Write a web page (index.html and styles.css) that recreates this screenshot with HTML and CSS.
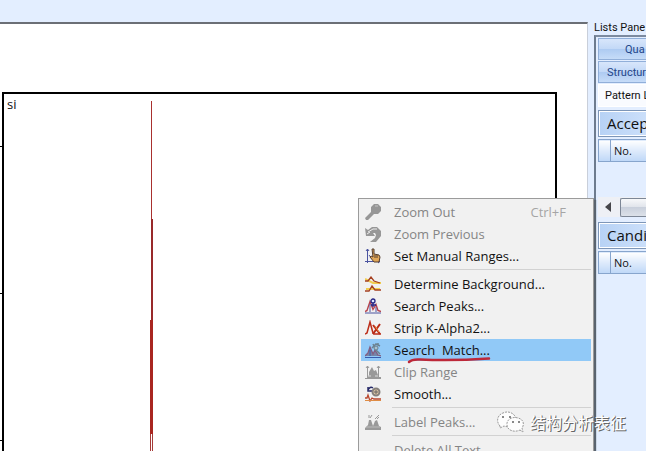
FILE: index.html
```html
<!DOCTYPE html>
<html lang="en">
<head>
<meta charset="utf-8">
<title>Search Match</title>
<link rel="stylesheet" href="styles.css">
</head>
<body>
<div class="window">
  <main class="document">
    <div class="plot">
      <svg class="axis" width="2" height="359" shape-rendering="crispEdges"><path d="M0 54.500h3M0 201.500h3M0 348.500h3" stroke="#000"/></svg>
      <div class="frame">
        <span class="scan-name">si</span>
        <svg class="peak" width="6" height="350" shape-rendering="crispEdges">
          <path d="M2 0h1v333h-1z" fill="#a8302e"/>
          <path d="M2 118h2v101h-2z" fill="#98292a"/>
          <path d="M1 219h3v114h-3z" fill="#a92620"/>
          <path d="M1 333h1v17h-1zM3 333h1v17h-1z" fill="#a63a38"/>
        </svg>
      </div>
    </div>
  </main>
  <aside class="lists">
    <div class="lists-title">Lists Pane</div>
    <div class="lists-body">
      <div class="tabs">
        <button class="tab tab-top">Qua</button>
        <button class="tab">Structur</button>
        <button class="tab active">Pattern L</button>
      </div>
      <section class="list">
        <h2>Accep</h2>
        <table><thead><tr><th class="mark"></th><th>No.</th></tr></thead></table>
        <div class="empty"></div>
        <div class="scrollbar"><svg width="22" height="20"><path d="M13 5v10l-6-5z" fill="#46464a"/></svg><span class="thumb"></span></div>
      </section>
      <section class="list">
        <h2>Candi</h2>
        <table><thead><tr><th class="mark"></th><th>No.</th></tr></thead></table>
      </section>
    </div>
  </aside>
</div>

<div class="menu">
  <button class="item" disabled>
    <svg class="icon" viewBox="0 0 16 16"><path d="M9 0h4l3 3v4l-3 3H9L3 16H1l-1-2 6-6V3z" fill="#979797"/><path d="M10 2h3" stroke="#c4c4c4"/></svg>
    <span>Zoom Out</span><span class="key">Ctrl+F</span></button>
  <button class="item" disabled>
    <svg class="icon" viewBox="0 0 16 16"><path d="M0 2l3 2 4-3h5l4 4v5l-5 6H5l5-4 1-3-1-2H8l2 3H1z" fill="#979797"/><path d="M3 6l5-3h4M2 8l3-2" fill="none" stroke="#ededed"/></svg>
    <span>Zoom Previous</span></button>
  <button class="item">
    <svg class="icon" viewBox="0 0 16 16"><path d="M2.500 1v14M0 13.500h15M1 3l1.500-2L4 3M13 12l2 1.500L13 15M4 7l3 4" fill="none" stroke="#4b54a0"/><path d="M7 1h2v5l5 1 1 2-1 5H9L5 9l1-1 2 1z" fill="#e1a758" stroke="#553e30"/><path d="M10 7v3M12 7v3" stroke="#553e30"/></svg>
    <span>Set Manual Ranges...</span></button>
  <hr>
  <button class="item">
    <svg class="icon" viewBox="0 0 16 16"><path d="M0 3l8 4h8M1 13h14" fill="none" stroke="#f1cd50" stroke-width="2"/><path d="M0 5h3l3-4 3 4 6 2M0 15h4l3-5 3 4h6" fill="none" stroke="#a54020" stroke-width="1.300"/></svg>
    <span>Determine Background...</span></button>
  <button class="item">
    <svg class="icon" viewBox="0 0 16 16"><path d="M0 13.500l2-1 3-9 3 8 3-5 2 6 3 1" fill="none" stroke="#b7424c" stroke-width="1.400"/><path d="M0 15h16M5 14V6M11 14V9" stroke="#4d559f"/><circle cx="8" cy="3" r="2" fill="#dae5ff" stroke="#252586" stroke-width="1.300"/><path d="M8 5v4M6 7h5" stroke="#252586" stroke-width="1.300"/></svg>
    <span>Search Peaks...</span></button>
  <button class="item">
    <svg class="icon" viewBox="0 0 16 16"><path d="M0 14l2-1 3-11 3 11 1 1h7" fill="none" stroke="#bc2d18" stroke-width="1.500"/><path d="M8 5l7 9M15 4l-7 10" stroke="#b92b17" stroke-width="2"/><path d="M10 6l4 6" stroke="#ef9143"/></svg>
    <span>Strip K-Alpha2...</span></button>
  <button class="item selected">
    <svg class="icon" viewBox="0 0 16 16"><path d="M0 14l3-3 2-6 3 7 2-4 3 5 3 1" fill="#7685a8" stroke="#825d80" stroke-width="1.300"/><path d="M0 15.500h16M5 14V8" stroke="#365cae"/><path d="M7 6l4-4 4 2M8 2l3 6M10 7l5 5M13 1v2" fill="none" stroke="#6b8290" stroke-width="1.500"/><circle cx="11" cy="6" r="2" fill="#abc3cd" stroke="#687f91"/></svg>
    <span class="marked">Search&nbsp; Match...
      <svg class="stroke" width="84" height="8" viewBox="0 0 84 8"><path d="M2 6Q5 3 13 3.500Q45 5 82 2.500" fill="none" stroke="#bd2839" stroke-width="2.500" stroke-linecap="round"/></svg></span></button>
  <button class="item" disabled>
    <svg class="icon" viewBox="0 0 16 16"><path d="M0 14h2l2-3V8l3-5 2 4 2-1 2 5v2h3v2H0z" fill="#999"/><path d="M2.500 14V2M13.500 14V2M1 4l1.500-2L4 4M12 4l1.500-2L15 4" fill="none" stroke="#999"/><path d="M3 12h3M10 12h3" stroke="#ddd"/></svg>
    <span>Clip Range</span></button>
  <button class="item">
    <svg class="icon" viewBox="0 0 16 16"><path d="M3 4q2-4 5-2M3 1v4h4" fill="none" stroke="#282b69" stroke-width="1.500"/><circle cx="11" cy="6" r="3.500" fill="#ddc6a5" stroke="#85807c" stroke-width="2"/><path d="M9 6h4M11 4v4" stroke="#666"/><path d="M0 12h2l1-3 2 6 2-3 2 1h7" fill="none" stroke="#b9462c" stroke-width="1.300"/><path d="M0 14.500h16" stroke="#df8c45"/></svg>
    <span>Smooth...</span></button>
  <hr>
  <button class="item" disabled>
    <svg class="icon" viewBox="0 0 16 16"><path d="M0 14l3-3 1-5h2l2 6 2-5 2-1 2 6 2 1v3H0z" fill="#999"/><path d="M4 1v3M7 1L5 4M10 5l4-4M12 5l2-2" stroke="#999"/><path d="M1 13h14" stroke="#bbb"/></svg>
    <span>Label Peaks...</span></button>
  <hr>
  <button class="item" disabled><span class="icon"></span><span>Delete All Text</span></button>
</div>

<div class="watermark">
  <svg width="28" height="22" viewBox="0 0 28 22"><g fill="#fdfdfd" stroke="#9a9a9a" stroke-dasharray="2 1"><path d="M3 15C-1 11 0 4 6 2c6-3 13 1 13 7-1 6-7 8-12 6l-4 2z"/><path d="M23 19l3 2-1-4c3-4 1-9-4-10-6-2-12 2-11 7 0 5 7 8 13 5z"/></g><path d="M5 6h2M12 6h2M15 11h2M21 11h2" stroke="#888" stroke-width="2"/></svg>
  <span>结构分析表征</span>
</div>
</body>
</html>
```

FILE: styles.css
```css
* { box-sizing: border-box; }

body {
  margin: 0;
  height: 100vh;
  overflow: hidden;
  position: relative;
  background: #e3eeff;
  color: #111;
  font-family: "Open Sans", "Noto Sans CJK SC", sans-serif;
  font-size: 13px;
}

button { border: 0; margin: 0; font: inherit; color: inherit; }
svg { display: block; flex: none; }

.window { display: flex; height: 100%; }

.document {
  flex: 1;
  margin-top: 22px;
  padding: 68px 30px 0 0;
  border-top: 2px solid #6b6f76;
  border-right: 1px solid #c9cfda;
  background: #fff;
}

.plot { display: flex; height: 100%; }

.frame {
  flex: 1;
  display: flex;
  border: 2px solid #000;
  border-bottom: 0;
}

.scan-name { width: 145px; padding: 2px 3px; line-height: 16px; }
.peak { margin-top: 7px; }

/* Lists pane, cut off by the window edge */
.lists {
  width: 58px;
  flex: none;
  display: flex;
  flex-direction: column;
  padding: 20px 0 0 6px;
  overflow: hidden;
  font-family: Roboto, "Open Sans", sans-serif;
  font-size: 11px;
  white-space: nowrap;
}

.lists-title { line-height: 15px; }

.lists-body {
  flex: 1;
  border-top: 2px solid #7c8a9f;
  border-left: 2px solid #6d7b8e;
  padding: 1px 0 0 2px;
  background: #e3eeff;
}

.tabs { display: flex; flex-direction: column; margin-bottom: 2px; }

.tab {
  height: 22px;
  margin-bottom: 1px;
  padding: 0 0 0 8px;
  border: 1px solid #91afd9;
  border-right: 0;
  background: linear-gradient(#d8e6fb, #c3d9f7 48%, #aecbf2 52%, #c6dcf8);
  color: #1f4589;
  text-align: left;
}

.tab-top { padding-left: 26px; }

.tab.active {
  height: 23px;
  padding-left: 6px;
  border-color: #fff;
  background: #f9fbff;
  color: #111;
}

.list { margin-bottom: 5px; }

.list h2 {
  height: 27px;
  margin: 0 0 2px;
  padding-left: 8px;
  border: 1px solid #7d96b8;
  border-right: 0;
  box-shadow: inset 1px 1px #fff, inset 0 -1px #fff;
  background: linear-gradient(90deg, #b7d2f5, #cbdffa);
  font-family: "Open Sans", sans-serif;
  font-size: 15px;
  font-weight: 400;
  line-height: 25px;
}

.list table { width: 100%; border-collapse: collapse; }

.list th {
  height: 22px;
  padding: 0 0 0 3px;
  border: 1px solid #87a5cd;
  border-right: 0;
  background: linear-gradient(#fff, #e0ecfc 45%, #bed7f7);
  font-family: "Open Sans", sans-serif;
  font-weight: 400;
  text-align: left;
}

.list .mark { width: 12px; padding: 0; }
.empty { height: 35px; }

.scrollbar { display: flex; height: 20px; background: #eef0f5; }

.thumb {
  flex: 1;
  margin-top: 1px;
  border: 1px solid #7d8796;
  border-right: 0;
  border-radius: 2px 0 0 2px;
  background: linear-gradient(#f7f8fa, #dfe3ea 50%, #c9d0dc 50%, #dce1e9);
}

.menu {
  position: absolute;
  top: 198px;
  left: 358px;
  width: 236px;
  padding: 2px;
  border: 1px solid #9b9b9b;
  background: #f1f1f1;
  box-shadow: 2px 2px 1px #59636e;
}

.item {
  display: flex;
  align-items: center;
  gap: 13px;
  width: 100%;
  height: 22px;
  padding: 0 25px 0 4px;
  background: none;
  text-align: left;
  line-height: 20px;
  white-space: nowrap;
}

.item:disabled { color: #858585; }
.item.selected { background: #91c9f7; }
.icon { width: 16px; height: 16px; flex: none; }
.item .key { margin-left: auto; color: #a5a5a5; }

.menu hr {
  height: 1px;
  margin: 2px 0 3px 31px;
  border: 0;
  background: #d2d2d2;
}

.marked { position: relative; }
.stroke { position: absolute; top: 16px; left: 13px; }

.watermark {
  position: absolute;
  top: 410px;
  left: 497px;
  display: flex;
  align-items: center;
  gap: 5px;
  color: #fff;
  font-family: "Noto Sans CJK SC", sans-serif;
  font-size: 16px;
  line-height: 24px;
  text-shadow: 1px 1px #666, 1px 0 #999;
}
```
